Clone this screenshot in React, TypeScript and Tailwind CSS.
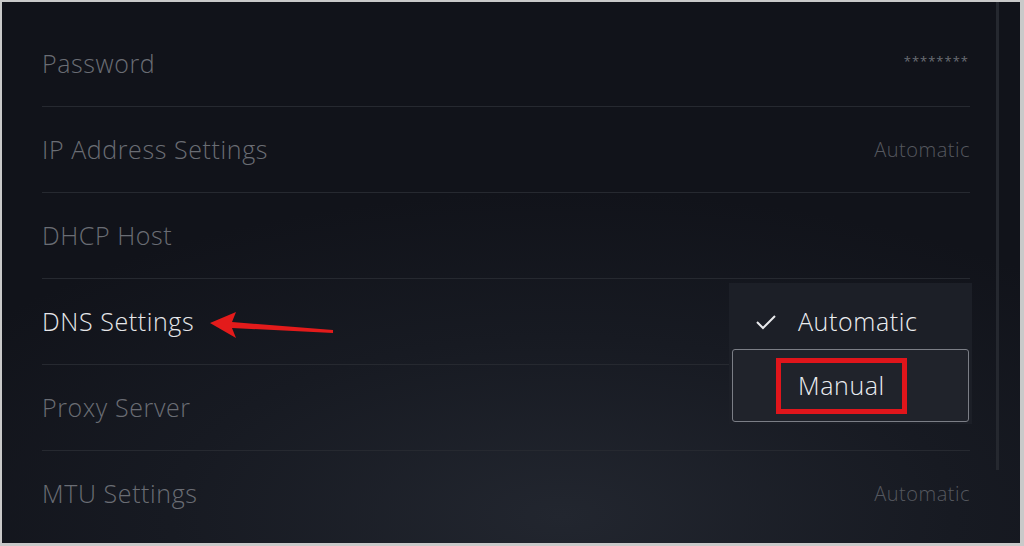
import React from "react";

const rows = [
  { label: "Password", value: "********", active: false },
  { label: "IP Address Settings", value: "Automatic", active: false },
  { label: "DHCP Host", value: "", active: false },
  { label: "DNS Settings", value: "", active: true },
  { label: "Proxy Server", value: "", active: false },
  { label: "MTU Settings", value: "Automatic", active: false },
];

export default function App() {
  return (
    <div
      className="w-[1024px] h-[546px] overflow-hidden bg-[#c9c9c9] pt-[2px] pl-[2px] pr-[4px] pb-[3px]"
      style={{ fontFamily: '"Open Sans", "Noto Sans", sans-serif' }}
    >
      <div className="relative w-full h-full flex bg-[#13151c] bg-[radial-gradient(ellipse_70%_60%_at_55%_95%,#22262f_0%,#171a22_55%,#11131a_100%)]">
        <div className="w-[968px] pl-[40px] pt-[19px] flex flex-col">
          {rows.map((r, i) => (
            <div
              key={r.label}
              className={`h-[86px] flex items-center justify-between shrink-0 ${
                i < rows.length - 1 ? "border-b border-[#262930]" : ""
              }`}
            >
              <span
                className={`text-[25px] font-light tracking-[0.6px] ${
                  r.active ? "text-[#e6e7ea]" : "text-[#6a6d74]"
                }`}
              >
                {r.label}
              </span>
              {r.value === "********" ? (
                <span className="text-[13px] text-[#6a6d74] tracking-[1px] pr-[1px] mb-[4px]">
                  ********
                </span>
              ) : (
                <span className="text-[20px] font-light tracking-[0.5px] text-[#55585f]">
                  {r.value}
                </span>
              )}
            </div>
          ))}
        </div>
        <div className="ml-[26px] w-[3px] h-[468px] bg-[#25282f]" />

        {/* Arrow annotation */}
        <svg
          className="absolute left-[205px] top-[307px]"
          width="130"
          height="36"
          viewBox="0 0 130 36"
        >
          <polygon points="3,14 29,3 25,13 126,21 126,24 25,19 29,29" fill="#e31b1b" />
        </svg>

        {/* Dropdown menu */}
        <div className="absolute left-[727px] top-[281px] w-[243px] h-[141px] bg-[#1c1f27] flex flex-col">
          <div className="h-[66px] flex items-center pl-[26px] pt-[12px]">
            <svg width="22" height="16" viewBox="0 0 22 16" className="mr-[21px]">
              <polyline
                points="2,8 8,14 20,2"
                fill="none"
                stroke="#e8e9ec"
                strokeWidth="2"
              />
            </svg>
            <span className="text-[25px] font-light tracking-[0.6px] text-[#eceef1]">
              Automatic
            </span>
          </div>
          <div className="mx-[3px] h-[73px] border-[1.5px] border-[#7b7e86] rounded-[3px] bg-[#20232b] flex items-center pl-[43px]">
            <div className="border-[5px] border-[#e0151b] px-[17px] h-[56px] flex items-center">
              <span className="text-[25px] font-light tracking-[0.6px] text-[#eceef1]">
                Manual
              </span>
            </div>
          </div>
        </div>
      </div>
    </div>
  );
}
